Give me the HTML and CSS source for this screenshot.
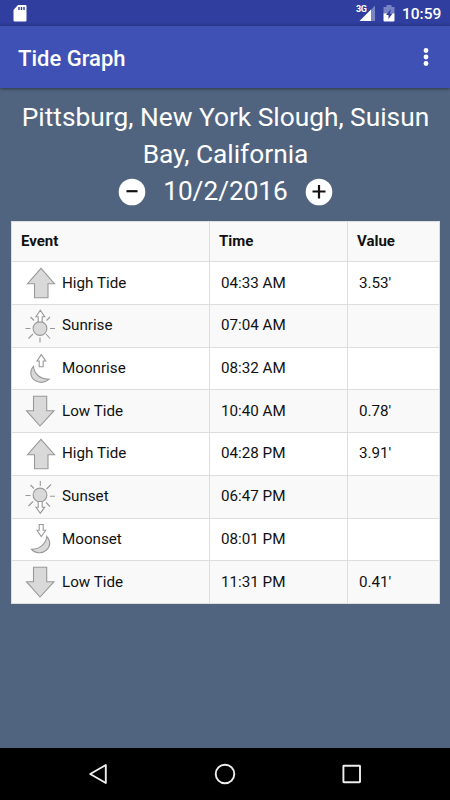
FILE: index.html
```html
<!DOCTYPE html>
<html lang="en">
<head>
<meta charset="utf-8">
<title>Tide Graph</title>
<link rel="stylesheet" href="styles.css">
</head>
<body>
<svg class="defs" aria-hidden="true">
  <symbol id="high" viewBox="0 0 32 40"><path d="M17 5.3 30.5 20.7H24V34.7H10.5V20.7H3.5Z"/></symbol>
  <symbol id="low" viewBox="0 0 32 40"><path d="M9.5 5.2H22.7V19.7H30L16 35 2.5 19.7H9.5Z"/></symbol>
  <symbol id="sunrise" viewBox="0 0 32 40"><path class="ray" d="M1.5 22.5H6.5M26 22.5H31M16 31.5V36.5M6.5 11 10 14.5M26 11 22.5 14.5M4.5 32.5 9 28M26 32.5 22 28"/><circle cx="16" cy="22.5" r="6.9"/><path class="hollow" d="M14.2 16V10.7H12L16.3 4.2 20.7 10.7H18.2V16Z"/></symbol>
  <symbol id="sunset" viewBox="0 0 32 40"><circle cx="16" cy="18" r="6.9"/><path class="ray" d="M1.5 18.5H6.5M26 19.3H31M16.3 4V9M6.5 8 10 11.5M27 7.5 22.5 12M4.5 29 9 24.5M26 29.5 22 25.5"/><path class="hollow" d="M14.2 24.5V30.2H12L16.3 36.2 20.7 30.2H18.2V24.5Z"/></symbol>
  <symbol id="moonrise" viewBox="0 0 32 40"><path class="hollow" d="M15.2 17.8V12H13L17.3 5.6 21.7 12H19.2V17.8Z"/><path d="M9.5 17.3C4.8 22.5 6.7 29.3 12 32 16.8 34.4 22 33 25.3 30.2 15.5 30.4 10 24.5 9.5 17.3Z"/></symbol>
  <symbol id="moonset" viewBox="0 0 32 40"><path class="hollow" d="M15.2 5.5V11.2H13L17.3 17.5 21.7 11.2H19.2V5.5Z"/><path d="M22.7 17.3C26.8 21.5 26.6 27.5 22.5 31 18 35 11 34.5 7.5 30.3 16 30.3 22.5 24 22.7 17.3Z"/></symbol>
</svg>
<div class="status">
  <svg class="sd" viewBox="0 0 14 17"><path d="M5 0H12.5Q13.5 0 13.5 1V15.5Q13.5 16.5 12.5 16.5H1.5Q.5 16.5 .5 15.5V5Z"/><path class="slots" d="M6 2V5M8.5 2V5M11 2V5"/></svg>
  <svg class="signal" viewBox="0 0 22 20"><path class="dim" d="M15 7 20 1.5V17H15Z"/><path d="M4.5 17 16 5.5V17Z"/><text x="1" y="8.2">3G</text></svg>
  <svg class="battery" viewBox="0 0 12 17"><path class="dim" d="M3.5 0H8.5V2H11.5V9H.5V2H3.5Z"/><path d="M.5 8.5H11.5V15.5Q11.5 16.5 10.5 16.5H1.5Q.5 16.5 .5 15.5Z"/><path class="bolt" d="M8 4 3 10H5.5V14L9.5 8.5H7Z"/></svg>
  <span class="clock">10:59</span>
</div>
<header class="appbar">
  <h1>Tide Graph</h1>
  <svg class="more" viewBox="0 0 6 20"><circle cx="3" cy="3.5" r="2.4"/><circle cx="3" cy="10" r="2.4"/><circle cx="3" cy="16.5" r="2.4"/></svg>
</header>
<main>
  <h2>Pittsburg, New York Slough, Suisun<br>Bay, California</h2>
  <div class="date">
    <svg class="round" viewBox="0 0 28 28"><circle cx="14" cy="14" r="13.3"/><path d="M8.5 13.2H19.5"/></svg>
    <span>10/2/2016</span>
    <svg class="round" viewBox="0 0 28 28"><circle cx="14" cy="14" r="13.3"/><path d="M7.5 13.5H20.5M14 7V20.5"/></svg>
  </div>
  <div class="table">
    <div class="row head"><b>Event</b><b>Time</b><b>Value</b></div>
    <div class="row"><div><svg><use href="#high"/></svg><span>High Tide</span></div><div><span>04:33 AM</span></div><div><span>3.53'</span></div></div>
    <div class="row"><div><svg><use href="#sunrise"/></svg><span>Sunrise</span></div><div><span>07:04 AM</span></div><div></div></div>
    <div class="row"><div><svg><use href="#moonrise"/></svg><span>Moonrise</span></div><div><span>08:32 AM</span></div><div></div></div>
    <div class="row"><div><svg><use href="#low"/></svg><span>Low Tide</span></div><div><span>10:40 AM</span></div><div><span>0.78'</span></div></div>
    <div class="row"><div><svg><use href="#high"/></svg><span>High Tide</span></div><div><span>04:28 PM</span></div><div><span>3.91'</span></div></div>
    <div class="row"><div><svg><use href="#sunset"/></svg><span>Sunset</span></div><div><span>06:47 PM</span></div><div></div></div>
    <div class="row"><div><svg><use href="#moonset"/></svg><span>Moonset</span></div><div><span>08:01 PM</span></div><div></div></div>
    <div class="row"><div><svg><use href="#low"/></svg><span>Low Tide</span></div><div><span>11:31 PM</span></div><div><span>0.41'</span></div></div>
  </div>
</main>
<nav>
  <svg viewBox="0 0 24 24"><path d="M4.2 12 19.8 3V21Z"/></svg>
  <svg viewBox="0 0 24 24"><circle cx="12" cy="12" r="9.3"/></svg>
  <svg viewBox="0 0 24 24"><rect x="3.4" y="3.7" width="16.6" height="16.6" rx=".5"/></svg>
</nav>
</body>
</html>
```
FILE: styles.css
```css
* { box-sizing: border-box; }
body {
  margin: 0;
  width: 450px;
  height: 800px;
  display: flex;
  flex-direction: column;
  overflow: hidden;
  background: #50647f;
  font-family: Roboto, sans-serif;
  color: #111;
}
.defs { position: absolute; width: 0; height: 0; }
.status {
  height: 26px;
  display: flex;
  align-items: flex-start;
  padding: 5px 9px 0 13px;
  background: linear-gradient(#303f9f 22px, #2d3a92);
  color: #fff;
  fill: #fff;
}
.sd { width: 14px; height: 17px; margin-right: auto; }
.slots { stroke: #303f9f; stroke-width: 1.4; }
.signal { width: 22px; height: 20px; margin: -1px 6px 0 0; }
.signal text { font-size: 9px; font-weight: 700; letter-spacing: -0.5px; paint-order: stroke; stroke: #303f9f; stroke-width: 1px; }
.dim { fill: #7984c4; }
.battery { width: 12px; height: 17px; margin-right: 7px; }
.bolt { fill: #303f9f; }
.clock { width: 39px; font-size: 15.5px; line-height: 18px; font-weight: 500; white-space: nowrap; }
.appbar {
  position: relative;
  height: 62px;
  display: flex;
  align-items: center;
  justify-content: space-between;
  padding: 0 21px 0 18px;
  background: #3f51b5;
  box-shadow: 0 1px 3px rgba(0, 0, 0, 0.45);
}
h1 { margin: 0; padding-top: 3px; font-size: 22px; line-height: 28px; font-weight: 500; color: #fff; }
.more { width: 6px; height: 20px; fill: #fff; }
main { flex: 1; padding: 11px 10px 0 11px; }
h2 {
  margin: 0;
  font-size: 26.3px;
  line-height: 37px;
  font-weight: 400;
  text-align: center;
  white-space: nowrap;
  color: #fff;
}
.date {
  height: 37px;
  display: flex;
  align-items: center;
  justify-content: center;
  gap: 17px;
  font-size: 26.2px;
  line-height: 37px;
  color: #fff;
}
.round { width: 28px; height: 28px; fill: #fff; }
.round path { stroke: #111; stroke-width: 2.2; }
.table {
  margin-top: 11px;
  border: 1px solid #ddd;
  background: #fff;
  font-size: 15.2px;
}
.row {
  display: grid;
  grid-template-columns: 197px 138px 1fr;
  height: 42.7px;
  border-bottom: 1px solid #ddd;
}
.row:last-child { border-bottom: 0; height: 42px; }
.row:nth-child(odd) { background: #f9f9f9; }
.row > * { display: flex; align-items: center; padding-left: 11px; }
.row > * + * { border-left: 1px solid #ddd; }
.row > :first-child { padding-left: 12px; }
.row span { padding-bottom: 1.2px; }
.row svg { width: 32px; height: 40px; margin-right: 6px; flex: none; fill: #d9d9d9; stroke: #999; stroke-width: 1.1; }
.hollow { fill: #fff; }
.row.head { height: 40.4px; }
.row.head b { font-weight: 700; font-size: 15px; padding: 0 0 1px 9px; }
nav {
  height: 52px;
  display: flex;
  justify-content: space-between;
  align-items: center;
  padding: 0 86px;
  background: #000;
  fill: none;
  stroke: #eee;
  stroke-width: 1.9;
  stroke-linejoin: round;
}
nav svg { width: 24px; height: 24px; }
```
